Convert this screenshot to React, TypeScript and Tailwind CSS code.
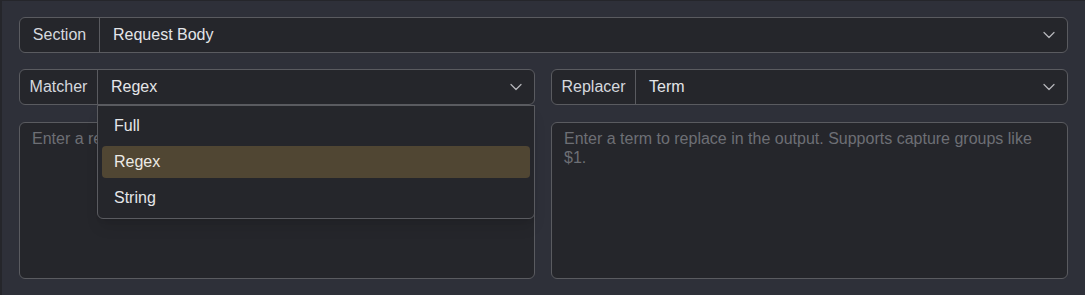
import { ChevronDown } from "lucide-react";

const font = { fontFamily: '"Liberation Sans", Arial, sans-serif' };

function SelectField({ label, value, labelWidth }: { label: string; value: string; labelWidth: string }) {
  return (
    <div className="flex h-[36px] w-full items-stretch rounded-md border border-[#5a5b60] bg-[#25262b] text-base">
      <div className={`flex items-center justify-center border-r border-[#5a5b60] text-[#d5d8de] ${labelWidth}`}>
        {label}
      </div>
      <div className="flex flex-1 items-center justify-between pl-[13px] pr-2 text-[#e4e5e8]">
        <span>{value}</span>
        <ChevronDown className="h-5 w-5 text-[#b4b5b9]" strokeWidth={1.5} />
      </div>
    </div>
  );
}

export default function App() {
  const options = ["Full", "Regex", "String"];

  return (
    <div
      style={font}
      className="h-[295px] w-[1085px] border-l-2 border-t border-[#25262b] bg-[#2e3039] pb-[16px] pl-[17px] pr-[17px] pt-[16px]"
    >
      <div className="flex h-full flex-col gap-[16px]">
        <SelectField label="Section" value="Request Body" labelWidth="w-[80px]" />

        <div className="grid flex-1 grid-cols-[516px_1fr] gap-x-[16px]">
          <div className="flex flex-col gap-[17px]">
            <div className="relative">
              <SelectField label="Matcher" value="Regex" labelWidth="w-[78px]" />
              <div className="absolute left-[78px] right-0 top-[36px] z-10 flex flex-col gap-1 rounded-b-md border border-[#5a5b60] bg-[#25262b] p-1 shadow-lg">
                {options.map((o) => (
                  <div
                    key={o}
                    className={
                      o === "Regex"
                        ? "flex h-8 items-center rounded-sm bg-[#504633] px-3 text-[#eceae5]"
                        : "flex h-8 items-center rounded-sm px-3 text-[#e4e5e8]"
                    }
                  >
                    {o}
                  </div>
                ))}
              </div>
            </div>
            <div className="flex-1 rounded-md border border-[#5a5b60] bg-[#25262b] px-3 pt-[6px] text-base leading-[19px] text-[#6d6f75]">
              Enter a regex to match in the input.
            </div>
          </div>

          <div className="flex flex-col gap-[17px]">
            <SelectField label="Replacer" value="Term" labelWidth="w-[84px]" />
            <div className="flex-1 rounded-md border border-[#5a5b60] bg-[#25262b] px-3 pt-[6px] text-base leading-[19px] text-[#6d6f75]">
              Enter a term to replace in the output. Supports capture groups like $1.
            </div>
          </div>
        </div>
      </div>
    </div>
  );
}
